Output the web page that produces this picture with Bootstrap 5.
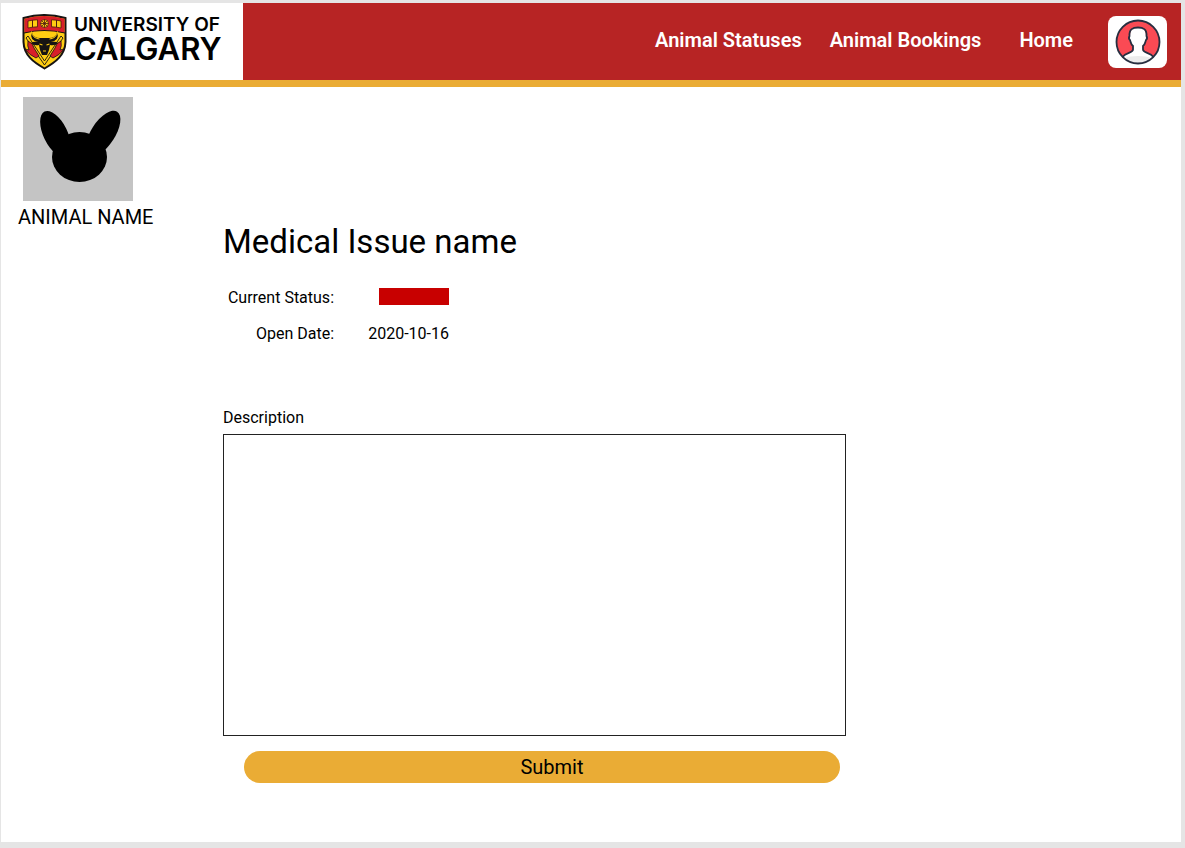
<!DOCTYPE html>
<html lang="en">
<head>
<meta charset="utf-8">
<meta name="viewport" content="width=device-width, initial-scale=1">
<title>Medical Issue – University of Calgary</title>
<link href="https://cdn.jsdelivr.net/npm/bootstrap@5.3.0/dist/css/bootstrap.min.css" rel="stylesheet">
<style>
  body { font-family: Roboto, "Liberation Sans", sans-serif; background: #e5e5e5; color: #000; padding: 3px 4px 6px 1px; line-height: 24px; }
  .site-header { background: #b72424; border-bottom: 7px solid #eaac35; min-height: 84px; }
  .brand { background: #fff; width: 242px; padding-left: 21px; color: #000; font-family: Inter, "Liberation Sans", sans-serif; font-weight: 600; }
  .brand-text { padding: 0 0 6px 7px; }
  .brand-top { font-size: 19px; line-height: 20px; }
  .brand-main { font-size: 31px; line-height: 28px; }
  .main-links { padding-right: 14px; column-gap: 28px; }
  .main-links .nav-link { color: #fff; font-size: 20px; font-weight: 600; padding: 0 0 4px; line-height: 24px; }
  .main-links .home-link { margin-left: 10px; margin-right: 7px; }
  .avatar-btn { width: 59px; height: 52px; border-radius: 8px; background: #fff; }
  .animal { width: 222px; padding: 10px 0 0 17px; }
  .animal-pic { width: 110px; height: 104px; margin-left: 5px; background: #c4c4c4; }
  .animal-name { font-size: 20px; line-height: 24px; margin-top: 4px; }
  .issue { max-width: 623px; padding-top: 135px; padding-bottom: 24px; }
  .issue-title { font-size: 33px; font-weight: 400; line-height: 40px; margin-bottom: 24px; }
  .facts { width: 226px; grid-template-columns: 111px 1fr; row-gap: 12px; }
  .status-cell { padding-top: 2px; }
  .status-bar { width: 70px; height: 17px; background: #c80000; }
  .form-label { margin: 60px 0 4px; }
  .issue-text { height: 302px; border: 1px solid #222; resize: none; }
  .submit-btn { background: #eaac35; color: #000; font-size: 20px; line-height: 32px; margin: 15px 6px 0 21px; padding: 0 0 0 20px; }
  .submit-btn:hover { background: #d99c28; }
</style>
</head>
<body class="min-vh-100 d-flex flex-column">
<div class="bg-white flex-grow-1">
  <header class="site-header d-flex flex-wrap">
    <a class="brand d-flex align-items-center text-decoration-none" href="#">
      <svg width="45" height="56" viewBox="0 0 45 56" role="img" aria-label="University crest">
        <path d="M1.500 4 Q22 -2 43.500 4 V28 C43 41 34 48 22.500 54.500 C11 48 2 41 1.500 28Z" fill="#ffcd12" stroke="#171413" stroke-width="2"/>
        <path d="M2.500 4.700 Q22 -.8 42.500 4.700 V19 Q22 14 2.500 19Z" fill="#d81f2a"/>
        <path d="M2 19 Q22 14 43 19" fill="none" stroke="#171413" stroke-width="1.200"/>
        <g fill="#ffcd12" stroke="#4a1711" stroke-width=".8">
          <path d="M6 7l4.500-.8v7L6 14Zm4.500-.8 5-.4v7l-5 .4Z"/>
          <path d="M29.500 5.800l5 .4v7l-5-.4Zm5 .4 4.500.8v7l-4.500-.8Z"/>
          <circle cx="22.500" cy="9.500" r="4"/>
          <path d="M22.500 5.500v8M18.500 9.500h8M19.700 6.700l5.600 5.600M25.300 6.700l-5.600 5.600"/>
        </g>
        <path d="M4 24l18.500 27L41 24l-2-2-16.500 25L6 22Z" fill="#ffcd12" stroke="#171413" stroke-width=".9"/>
        <g fill="#d81f2a" stroke="#171413" stroke-width=".8">
          <path d="M6 27q5 2 6 7l5 8-3 2q-7-3-11-9l4 1q-2-4-1-9Z"/>
          <path d="M39 27q-5 2-6 7l-5 8 3 2q7-3 11-9l-4 1q2-4 1-9Z"/>
        </g>
        <path d="M10 18Q11 24 18 24h9q7 0 8-6 3 8-6 10 5-1 7 1-3 3-8 2l-1 5-2 5h-5l-2-5-1-5q-5 1-8-2 2-2 7-1-9-2-6-10Z" fill="#171413"/>
        <path d="M9.500 17.500q1 7 8 7.500M35.500 17.500q-1 7-8 7.500" fill="none" stroke="#ffcd12"/>
        <path d="M17.500 30l3 1M27.500 30l-3 1M21 37h3" stroke="#ffcd12" stroke-width="1.200"/>
      </svg>
      <span class="brand-text">
        <span class="brand-top d-block">UNIVERSITY OF</span>
        <span class="brand-main d-block">CALGARY</span>
      </span>
    </a>
    <nav class="main-links ms-auto d-flex align-items-center" aria-label="Main">
      <a class="nav-link" href="#">Animal Statuses</a>
      <a class="nav-link" href="#">Animal Bookings</a>
      <a class="nav-link home-link" href="#">Home</a>
      <button class="avatar-btn btn border-0 p-0 d-flex align-items-center justify-content-center" type="button" aria-label="Account">
        <svg width="46" height="46" viewBox="0 0 46 46">
          <circle cx="23" cy="23" r="21.500" fill="#fa4a54"/>
          <path d="M7.500 38C11 33.500 18 33 18 30v-3c-3-3-3-6-3-10C15 10 19 8 23 8s8 2 8 9c0 4 0 7-3 10v3c0 3 7 3.500 10.500 8Q32 44.500 23 44.500T7.500 38Z" fill="#fff"/>
          <path d="M9 39Q15 37 23 37t14 2Q32 44 23 44T9 39Z" fill="#ececec"/>
          <path d="M7.500 38C11 33.500 18 34 18 30.500v-3.500c-2.500-2-2-3.500-3-6-1.500-1-1-3-.5-4C14 10 18 8.500 23 8.500s9 1.500 8.500 8.500c.5 1 1 3-.5 4-1 2.500-.5 4-3 6v3.500c0 3.500 7 3 10.500 7.500" fill="none" stroke="#272e40" stroke-width="1.800"/>
          <circle cx="23" cy="23" r="21.500" fill="none" stroke="#272e40" stroke-width="1.800"/>
        </svg>
      </button>
    </nav>
  </header>

  <main class="d-flex flex-wrap flex-md-nowrap">
    <aside class="animal flex-shrink-0">
      <svg class="animal-pic d-block" viewBox="0 0 110 104" role="img" aria-label="Animal picture">
        <ellipse cx="56.500" cy="60" rx="27.500" ry="25"/>
        <ellipse cx="32.500" cy="37" rx="12" ry="25" transform="rotate(-26 32.500 37)"/>
        <ellipse cx="80" cy="36.500" rx="12" ry="26" transform="rotate(33 80 36.500)"/>
      </svg>
      <div class="animal-name">ANIMAL NAME</div>
    </aside>
    <form class="issue w-100 d-flex flex-column">
      <h1 class="issue-title">Medical Issue name</h1>
      <dl class="facts d-grid mb-0 text-end">
        <dt class="fw-normal">Current Status:</dt>
        <dd class="status-cell mb-0 d-flex align-items-start justify-content-end"><span class="status-bar" role="img" aria-label="Open"></span></dd>
        <dt class="fw-normal">Open Date:</dt>
        <dd class="mb-0">2020-10-16</dd>
      </dl>
      <label class="form-label" for="description">Description</label>
      <textarea class="issue-text form-control rounded-0" id="description"></textarea>
      <button class="submit-btn btn border-0 rounded-pill" type="submit">Submit</button>
    </form>
  </main>
</div>
<script src="https://cdn.jsdelivr.net/npm/bootstrap@5.3.0/dist/js/bootstrap.bundle.min.js"></script>
</body>
</html>
